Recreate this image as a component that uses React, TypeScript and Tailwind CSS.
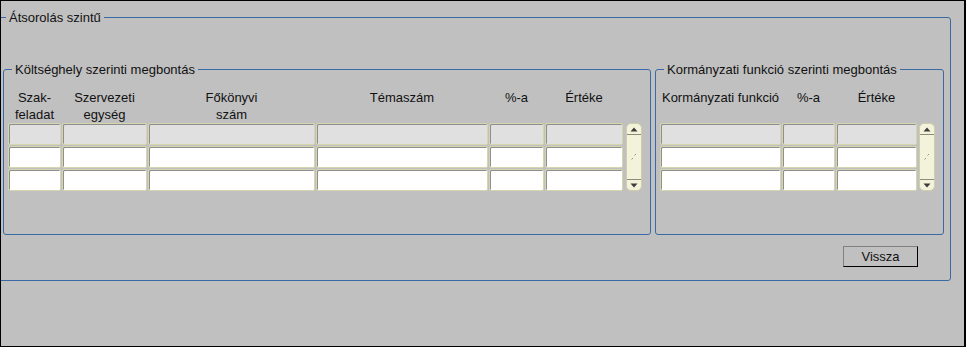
import React from "react";

const FONT = "font-['Liberation_Sans',Arial,sans-serif]";

function Triangle({ down }: { down?: boolean }) {
  return (
    <svg width="8" height="5" viewBox="0 0 8 5">
      {down ? (
        <polygon points="0.5,0.5 7.5,0.5 4,4.5" fill="#3c3c3c" />
      ) : (
        <polygon points="0.5,4.5 7.5,4.5 4,0.5" fill="#3c3c3c" />
      )}
    </svg>
  );
}

function ScrollBar({ className = "" }: { className?: string }) {
  return (
    <div
      className={`flex h-[68px] w-[16px] flex-col rounded-[5px] border border-[#cfcfa6] bg-[#f3f3dc] ${className}`}
    >
      <div className="flex h-[11px] items-center justify-center border-b border-[#8c8c7a]">
        <Triangle />
      </div>
      <div className="flex flex-1 items-center justify-center">
        <svg width="8" height="8" viewBox="0 0 8 8">
          <rect x="5" y="1" width="1" height="1" fill="#9a9a80" />
          <rect x="4" y="2" width="1" height="1" fill="#c8c8b0" />
          <rect x="2" y="5" width="1" height="1" fill="#9a9a80" />
          <rect x="1" y="6" width="1" height="1" fill="#c8c8b0" />
        </svg>
      </div>
      <div className="flex h-[11px] items-center justify-center border-t border-[#8c8c7a]">
        <Triangle down />
      </div>
    </div>
  );
}

function Cell({ gray }: { gray?: boolean }) {
  return (
    <div
      className={`h-[22px] rounded-[2px] border border-[#d6d6ae] shadow-[inset_1px_1px_0_#8e8e8e] ${
        gray ? "bg-[#e0e0e0]" : "bg-white"
      }`}
    />
  );
}

function Rows({ count }: { count: number }) {
  const rows = [0, 1, 2];
  return (
    <>
      {rows.map((r) =>
        Array.from({ length: count }).map((_, c) => (
          <Cell key={`${r}-${c}`} gray={r === 0} />
        ))
      )}
    </>
  );
}

function Legend({ children }: { children: React.ReactNode }) {
  return (
    <legend className="ml-[8px] px-[3px] text-[13px] leading-[15px] text-[#111]">
      {children}
    </legend>
  );
}

export default function App() {
  return (
    <div
      className={`${FONT} h-[347px] w-[966px] overflow-hidden border-t border-l border-b border-r-2 border-black bg-[#c0c0c0] text-[13px] text-[#111]`}
    >
      <fieldset className="m-0 ml-[-6px] mt-[9px] w-[956px] min-w-0 rounded-[3px] border border-[#3a6aa3] p-0">
        <legend className="ml-[10px] px-[3px] text-[13px] leading-[15px] text-[#111]">
          Átsorolás szintű
        </legend>
        <div className="flex flex-col pl-[7px] pt-[37px] pb-[13px]">
          <div className="flex gap-[4px]">
            {/* Left group */}
            <fieldset className="m-0 w-[648px] min-w-0 rounded-[3px] border border-[#3a6aa3] p-0">
              <Legend>Költséghely szerinti megbontás</Legend>
              <div className="flex flex-col pl-[4px] pt-[12px] pb-[43px]">
                <div className="grid h-[34px] grid-cols-[53px_85px_167px_172px_55px_78px] gap-x-px text-center leading-[17px]">
                  <div>
                    Szak-
                    <br />
                    feladat
                  </div>
                  <div>
                    Szervezeti
                    <br />
                    egység
                  </div>
                  <div>
                    Főkönyvi
                    <br />
                    szám
                  </div>
                  <div>Témaszám</div>
                  <div>%-a</div>
                  <div>Értéke</div>
                </div>
                <div className="flex items-start">
                  <div className="grid grid-cols-[53px_85px_167px_172px_55px_78px] gap-px">
                    <Rows count={6} />
                  </div>
                  <ScrollBar className="ml-[3px]" />
                </div>
              </div>
            </fieldset>

            {/* Right group */}
            <fieldset className="m-0 w-[289px] min-w-0 rounded-[3px] border border-[#3a6aa3] p-0">
              <Legend>Kormányzati funkció szerinti megbontás</Legend>
              <div className="flex flex-col pl-[4px] pt-[12px] pb-[43px]">
                <div className="grid h-[34px] grid-cols-[121px_53px_81px] gap-x-px whitespace-nowrap text-center leading-[17px]">
                  <div>Kormányzati funkció</div>
                  <div>%-a</div>
                  <div>Értéke</div>
                </div>
                <div className="flex items-start">
                  <div className="grid grid-cols-[121px_53px_81px] gap-px">
                    <Rows count={3} />
                  </div>
                  <ScrollBar className="ml-[2px]" />
                </div>
              </div>
            </fieldset>
          </div>

          <div className="mt-[11px] flex justify-end pr-[32px]">
            <button
              type="button"
              className="h-[21px] w-[75px] border border-t-[#808080] border-l-[#808080] border-r-black border-b-black bg-[#c0c0c0] text-[13px] leading-[17px] text-[#111]"
            >
              Vissza
            </button>
          </div>
        </div>
      </fieldset>
    </div>
  );
}
